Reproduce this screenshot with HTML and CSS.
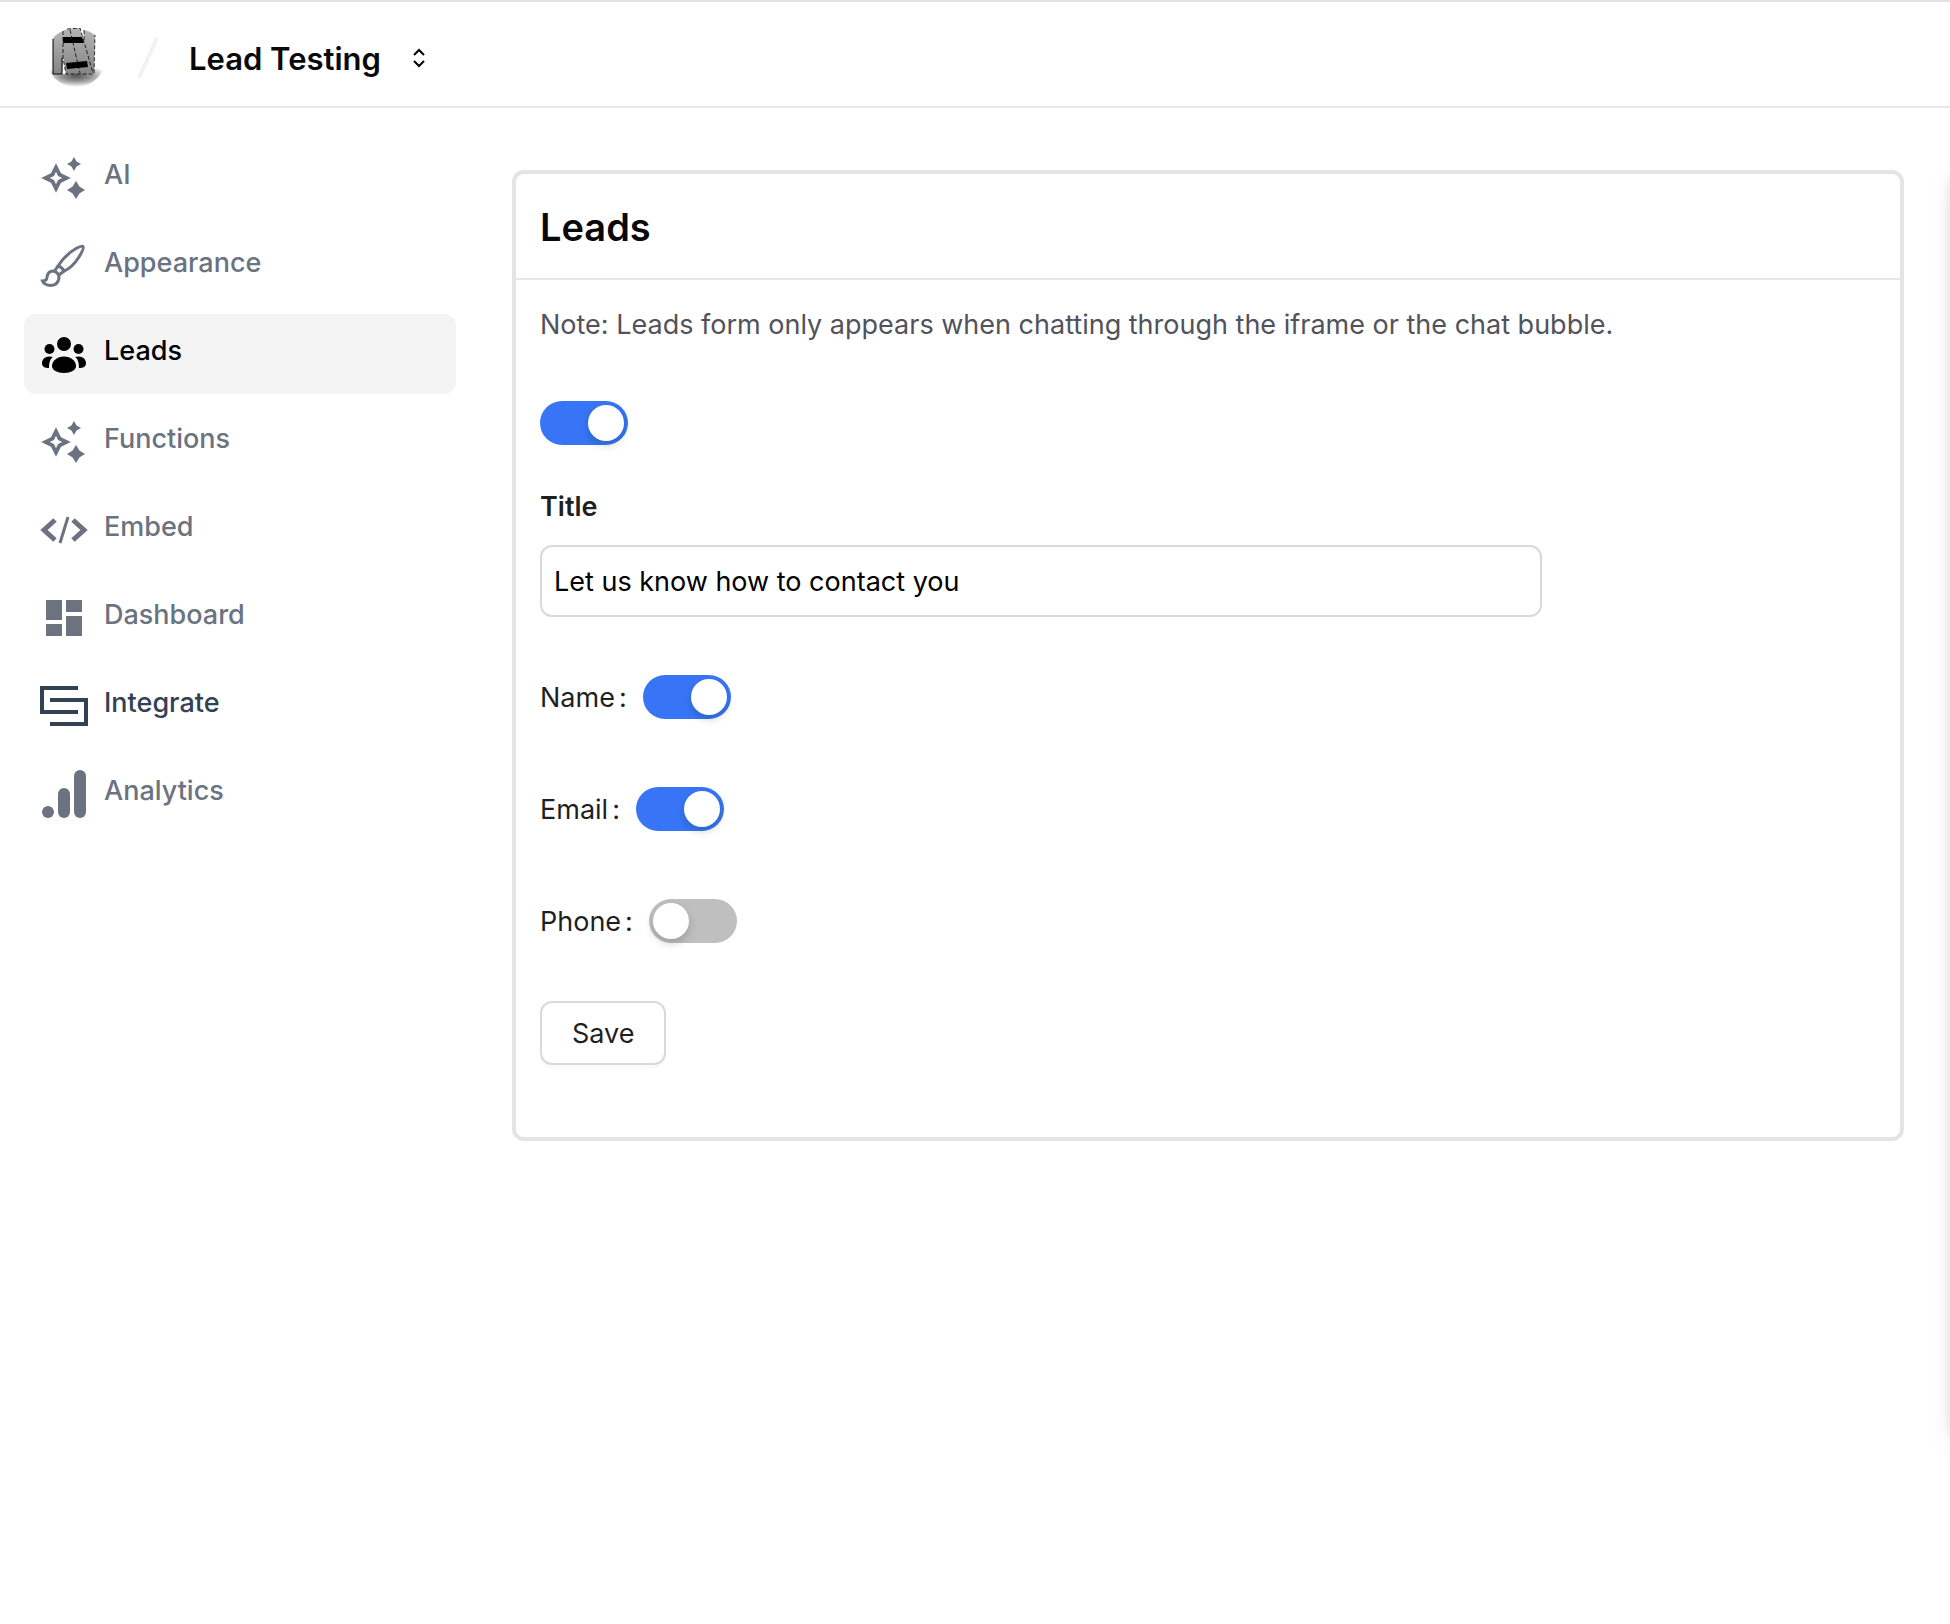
FILE: index.html
```html
<!DOCTYPE html>
<html lang="en">
<head>
    <meta charset="utf-8">
    <title>Lead Testing - Leads</title>
    <link rel="stylesheet" href="styles.css">
</head>
<body>
    <header class="topbar">
        <a href="#" class="logo" aria-label="Home">
            <svg viewBox="0 0 60 60" width="60" height="60">
                <defs>
                    <clipPath id="round"><circle cx="30" cy="29" r="30"/></clipPath>
                    <linearGradient id="metal" x1="0" y1="0" x2="0" y2="1">
                        <stop offset="0" stop-color="#b4b4b4"/>
                        <stop offset="1" stop-color="#858585"/>
                    </linearGradient>
                    <radialGradient id="shade">
                        <stop offset="0" stop-color="#555"/>
                        <stop offset="0.5" stop-color="#999"/>
                        <stop offset="1" stop-color="#fff"/>
                    </radialGradient>
                </defs>
                <g clip-path="url(#round)">
                    <ellipse cx="30" cy="48" rx="32" ry="11" fill="url(#shade)"/>
                    <path d="M7 10Q10 6 17 3V46H7z" fill="url(#metal)"/>
                    <path d="M38 2Q44 3 49 7L48 45H46L38 14z" fill="url(#metal)"/>
                    <path d="M17 3Q21 0 34 0L47 45L20 46L17 30z" fill="url(#metal)"/>
                    <path d="M17 29L20 46H16z" fill="#fff"/>
                    <path d="M17 9H36L38 15H17zM20 35L41 33L42 39L21 41z"/>
                    <path d="M7 11V46H16V30" fill="none" stroke="#000"/>
                    <path d="M17 3V30L20 46H48L49 7M21 1L34 0L47 45M24 2L34 45M38 2V14" fill="none" stroke="#000" stroke-width="0.8" stroke-dasharray="4 2"/>
                </g>
            </svg>
        </a>
        <svg class="slash" viewBox="0 0 48 48" width="48" height="48"><path d="M15 44L33 4"/></svg>
        <span class="project">Lead Testing</span>
        <button class="switcher" aria-label="Switch project">
            <svg viewBox="0 0 24 24" width="24" height="24"><path d="M7 9L12 4L17 9M7 15L12 20L17 15"/></svg>
        </button>
    </header>

    <div class="layout">
        <nav class="sidebar">
            <a href="#">
                <svg viewBox="0 0 24 24"><use href="#sparkles"/></svg>
                <span>AI</span>
            </a>
            <a href="#">
                <svg viewBox="0 0 48 48" class="line">
                    <path d="M18 24Q25 13 36 6.500Q42 3 43 4.500Q44.500 6 39 15Q32 26 24 29Q22 25 18 24z"/>
                    <path d="M18 24L15 28.500M24 29L19 33"/>
                    <path d="M2.500 39Q7 39 7 35Q8 29 13 29Q19 30 19 36Q18 43 11 43.500Q4 43 2.500 39z"/>
                </svg>
                <span>Appearance</span>
            </a>
            <a href="#" class="active">
                <svg viewBox="0 0 48 48">
                    <circle cx="24" cy="14" r="7"/>
                    <circle cx="9.500" cy="19" r="5"/>
                    <circle cx="38.500" cy="19" r="5"/>
                    <path d="M24 26.500C31 26.500 36 31 36 36C36 40 31 43 24 43C17 43 12 40 12 36C12 31 17 26.500 24 26.500z"/>
                    <path d="M13 27C10 29 9 33 9 38C5 38 2 37 2 33C2 29 6 25 13 27z"/>
                    <path d="M35 27C38 29 39 33 39 38C43 38 46 37 46 33C46 29 42 25 35 27z"/>
                </svg>
                <span>Leads</span>
            </a>
            <a href="#">
                <svg viewBox="0 0 24 24"><use href="#sparkles"/></svg>
                <span>Functions</span>
            </a>
            <a href="#">
                <svg viewBox="0 0 48 48" class="line">
                    <path d="M15 14L4 24L15 34M33 14L44 24L33 34" stroke-width="5"/>
                    <path d="M28 11L20 37" stroke-width="3"/>
                </svg>
                <span>Embed</span>
            </a>
            <a href="#">
                <svg viewBox="0 0 24 24"><path d="M3 13h8V3H3zm0 8h8v-6H3zm10 0h8V11h-8zm0-18v6h8V3z"/></svg>
                <span>Dashboard</span>
            </a>
            <a href="#" class="dark">
                <svg viewBox="0 0 48 48" class="line">
                    <path d="M38 6H2V30H38M10 18H46V42H10" stroke-width="4"/>
                </svg>
                <span>Integrate</span>
            </a>
            <a href="#">
                <svg viewBox="0 0 48 48">
                    <circle cx="8" cy="42" r="6"/>
                    <rect x="18" y="18" width="12" height="30" rx="6"/>
                    <rect x="34" y="0" width="12" height="48" rx="6"/>
                </svg>
                <span>Analytics</span>
            </a>
        </nav>

        <main class="content">
            <section class="card">
                <h1>Leads</h1>
                <form>
                    <p class="note">Note: Leads form only appears when chatting through the iframe or the chat bubble.</p>
                    <div class="row first">
                        <input type="checkbox" class="switch" aria-label="Enable leads form" checked>
                    </div>
                    <label class="title-label" for="title">Title</label>
                    <input type="text" class="text" id="title" value="Let us know how to contact you">
                    <div class="row">
                        <label for="name">Name<span>:</span></label>
                        <input type="checkbox" class="switch" id="name" checked>
                    </div>
                    <div class="row">
                        <label for="email">Email<span>:</span></label>
                        <input type="checkbox" class="switch" id="email" checked>
                    </div>
                    <div class="row">
                        <label for="phone">Phone<span>:</span></label>
                        <input type="checkbox" class="switch" id="phone">
                    </div>
                    <button type="button" class="save">Save</button>
                </form>
            </section>
        </main>
    </div>

    <!-- chat drawer, parked past the right edge -->
    <aside class="drawer"></aside>

    <svg class="sprite" width="0" height="0">
        <symbol id="sparkles" viewBox="0 0 24 24">
            <path fill-rule="evenodd" d="M8 4.600L10.300 9.200Q10.500 9.500 10.800 9.700L15.400 12L10.800 14.300Q10.500 14.500 10.300 14.800L8 19.400L5.700 14.800Q5.500 14.500 5.200 14.300L.6 12L5.200 9.700Q5.500 9.500 5.700 9.200zM8 8.900L7 11L4.900 12L7 13L8 15.100L9 13L11.100 12L9 11z"/>
            <path d="M17 1.500L18.300 3.700L20.500 5L18.300 6.300L17 8.500L15.700 6.300L13.500 5L15.700 3.700zM18 13.500L19.700 16.300L22.500 18L19.700 19.700L18 22.500L16.300 19.700L13.500 18L16.300 16.300z"/>
        </symbol>
    </svg>
</body>
</html>
```
FILE: styles.css
```css
* {
    box-sizing: border-box;
}

body {
    font-family: Inter, Arial, sans-serif;
    font-size: 27px;
    color: #1f1f1f;
    background-color: #fff;
    margin: 0;
    overflow-x: hidden;
}

.topbar {
    display: flex;
    align-items: center;
    border-top: 2px solid #e2e2e2;
    border-bottom: 2px solid #e5e7eb;
    padding: 24px 46px 16px;
    height: 108px;
}

.logo {
    height: 60px;
}

.slash {
    margin: 0 17px 0 18px;
    fill: none;
    stroke: #f2f2f2;
    stroke-width: 4;
}

.project {
    font-size: 31px;
    font-weight: 600;
    color: #09090b;
}

.switcher {
    display: flex;
    margin-left: 26px;
    padding: 0;
    border: none;
    background: none;
    cursor: pointer;
}

.switcher svg {
    fill: none;
    stroke: #000;
    stroke-width: 2;
}

.layout {
    display: flex;
}

.sidebar {
    display: flex;
    flex-direction: column;
    gap: 8px;
    width: 480px;
    padding: 30px 24px;
    flex-shrink: 0;
}

.sidebar a {
    display: flex;
    align-items: center;
    gap: 16px;
    height: 80px;
    padding: 0 16px;
    border-radius: 12px;
    color: #6b7280;
    font-weight: 500;
    text-decoration: none;
}

.sidebar a.active {
    background-color: #f4f4f4;
    color: #000;
}

.sidebar a.dark {
    color: #334155;
}

.sidebar span {
    padding-bottom: 8px;
}

.sidebar svg {
    width: 48px;
    height: 48px;
    fill: currentColor;
}

.sidebar .line {
    fill: none;
    stroke: currentColor;
    stroke-width: 3;
}

.content {
    flex: 1;
    padding: 62px 46px 64px 32px;
}

.card {
    border: 4px solid #e4e4e7;
    border-radius: 12px;
}

.card h1 {
    margin: 0;
    padding: 29px 24px 27px;
    border-bottom: 2px solid #e5e7eb;
    color: #09090b;
    font-size: 38px;
    line-height: 48px;
    font-weight: 600;
}

form {
    padding: 24px 24px 72px;
}

.note {
    margin: 0 0 45px;
    line-height: 42px;
    color: #52525b;
}

.row {
    display: flex;
    align-items: center;
    height: 64px;
    margin-bottom: 48px;
}

.row.first {
    margin-bottom: 30px;
}

.row label span {
    margin: 0 16px 0 4px;
}

.title-label {
    display: block;
    margin-bottom: 16px;
    line-height: 44px;
    font-weight: 600;
}

.text {
    display: block;
    width: 75%;
    height: 72px;
    margin-bottom: 48px;
    padding: 0 12px;
    border: 2px solid #d9d9d9;
    border-radius: 12px;
    font: inherit;
    color: #000;
}

.switch {
    appearance: none;
    width: 88px;
    height: 44px;
    margin: 0;
    padding: 4px;
    border-radius: 22px;
    background-color: #bfbfbf;
    cursor: pointer;
}

.switch::before {
    content: "";
    display: block;
    width: 36px;
    height: 36px;
    border-radius: 50%;
    background-color: #fff;
    box-shadow: 0 4px 8px rgba(0, 35, 11, 0.2);
}

.switch:checked {
    background-color: #3875f6;
}

.switch:checked::before {
    margin-left: auto;
}

.save {
    display: block;
    height: 64px;
    padding: 0 30px;
    border: 2px solid #d9d9d9;
    border-radius: 12px;
    background-color: #fff;
    box-shadow: 0 4px 0 rgba(0, 0, 0, 0.02);
    color: #1f1f1f;
    font: inherit;
    cursor: pointer;
}

.drawer {
    position: fixed;
    top: 166px;
    bottom: 188px;
    left: 100%;
    width: 400px;
    border-radius: 16px;
    box-shadow: 0 12px 32px rgba(0, 0, 0, 0.06), 0 6px 12px rgba(0, 0, 0, 0.12);
}

.sprite {
    display: block;
}
```
